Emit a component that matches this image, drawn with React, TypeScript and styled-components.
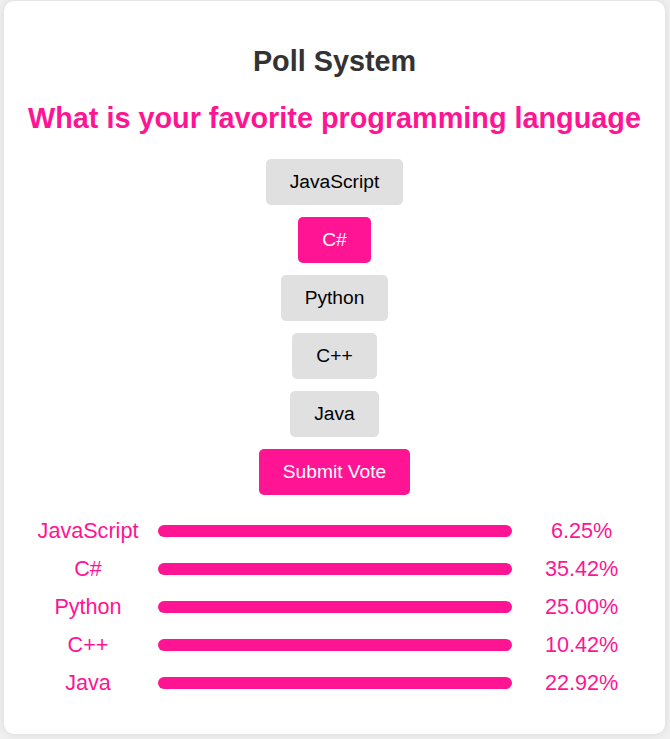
import React, { useState } from 'react'
import styled, { createGlobalStyle } from 'styled-components'

const GlobalStyle = createGlobalStyle`
  html, body {
    margin: 0;
    padding: 0;
    background: #f0f0f0;
    font-family: "Liberation Sans", Arial, sans-serif;
    overflow: hidden;
  }
`

const Page = styled.div`
  padding: 1px 5px 7px 4px;
`

const Card = styled.div`
  background: #fff;
  border-radius: 10px;
  box-shadow: 0 0 10px rgba(0, 0, 0, 0.1);
  padding: 20px 20px 39px;
  text-align: center;
`

const Title = styled.h1`
  font-size: 28.8px;
  font-weight: bold;
  color: #333;
  margin: 24px 0 24px;
`

const Question = styled.h2`
  font-size: 28.8px;
  font-weight: bold;
  color: #ff1493;
  margin: 0 0 24px;
`

const Options = styled.div`
  display: flex;
  flex-direction: column;
  align-items: center;
  gap: 12px;
`

const OptionButton = styled.button<{ $active?: boolean }>`
  font-family: "Liberation Sans", Arial, sans-serif;
  font-size: 19.2px;
  line-height: 22px;
  padding: 12px 24px;
  border: none;
  border-radius: 5px;
  cursor: pointer;
  background: ${p => (p.$active ? '#ff1493' : '#e0e0e0')};
  color: ${p => (p.$active ? '#fff' : '#000')};
`

const SubmitButton = styled(OptionButton)`
  background: #ff1493;
  color: #fff;
`

const Results = styled.div`
  margin-top: 24px;
  display: flex;
  flex-direction: column;
  gap: 14px;
`

const ResultRow = styled.div`
  display: grid;
  grid-template-columns: 128px 354px 1fr;
  column-gap: 6px;
  align-items: center;
  color: #ff1493;
  font-size: 21.6px;
  line-height: 24px;
`

const Label = styled.div`
  text-align: center;
`

const Bar = styled.div`
  height: 12px;
  border-radius: 6px;
  background: #ff1493;
`

const Percent = styled.div`
  text-align: center;
`

const languages = ['JavaScript', 'C#', 'Python', 'C++', 'Java']
const votes = [6.25, 35.42, 25.0, 10.42, 22.92]

const App = () => {
  const [selected, setSelected] = useState('C#')

  return (
    <Page>
      <GlobalStyle />
      <Card>
        <Title>Poll System</Title>
        <Question>What is your favorite programming language</Question>
        <Options>
          {languages.map(lang => (
            <OptionButton key={lang} $active={selected === lang} onClick={() => setSelected(lang)}>
              {lang}
            </OptionButton>
          ))}
          <SubmitButton>Submit Vote</SubmitButton>
        </Options>
        <Results>
          {languages.map((lang, i) => (
            <ResultRow key={lang}>
              <Label>{lang}</Label>
              <Bar />
              <Percent>{votes[i].toFixed(2)}%</Percent>
            </ResultRow>
          ))}
        </Results>
      </Card>
    </Page>
  )
}

export default App
